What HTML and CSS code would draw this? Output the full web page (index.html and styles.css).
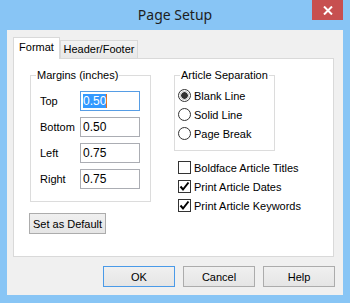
FILE: index.html
```html
<!DOCTYPE html>
<html>
<head>
	<title>Page Setup</title>
	<link rel="stylesheet" href="styles.css">
</head>
<body>
	<div class="window">
		<div class="titlebar">
			<span class="title">Page Setup</span>
			<span class="close">
				<svg width="10" height="9" viewBox="0 0 10 9"><path d="M1 0.5L9 8.5M9 0.5L1 8.5" stroke="#fff" stroke-width="2"/></svg>
			</span>
		</div>

		<div class="client">
			<div class="tabs">
				<div class="tab active">Format</div>
				<div class="tab">Header/Footer</div>
			</div>

			<div class="panel">
				<div class="col-left">
					<div class="group margins">
						<span class="group-title">Margins (inches)</span>
						<div class="fields">
							<div class="field"><span class="field-label">Top</span><span class="input focus"><span class="sel">0.50</span></span></div>
							<div class="field"><span class="field-label">Bottom</span><span class="input">0.50</span></div>
							<div class="field"><span class="field-label">Left</span><span class="input">0.75</span></div>
							<div class="field"><span class="field-label">Right</span><span class="input">0.75</span></div>
						</div>
					</div>
					<button class="btn default-btn">Set as Default</button>
				</div>

				<div class="col-right">
					<div class="group separation">
						<span class="group-title">Article Separation</span>
						<ul class="options">
							<li><span class="radio checked"></span>Blank Line</li>
							<li><span class="radio"></span>Solid Line</li>
							<li><span class="radio"></span>Page Break</li>
						</ul>
					</div>
					<ul class="options checks">
						<li><span class="check"></span>Boldface Article Titles</li>
						<li><span class="check on"><svg width="11" height="11" viewBox="0 0 11 11"><path d="M1.5 5.5L4 8.5L9.5 1.5" fill="none" stroke="#000" stroke-width="2"/></svg></span>Print Article Dates</li>
						<li><span class="check on"><svg width="11" height="11" viewBox="0 0 11 11"><path d="M1.5 5.5L4 8.5L9.5 1.5" fill="none" stroke="#000" stroke-width="2"/></svg></span>Print Article Keywords</li>
					</ul>
				</div>
			</div>

			<div class="actions">
				<button class="btn primary">OK</button>
				<button class="btn">Cancel</button>
				<button class="btn">Help</button>
			</div>
		</div>
	</div>
</body>
</html>
```

FILE: styles.css
```css
*{
	margin: 0;
	padding: 0;
	box-sizing: border-box;
}
ul{
	list-style: none;
}
body{
	width: 350px;
	height: 303px;
	background: #88c5f5;
	font-family: "Liberation Sans", Arial, sans-serif;
	font-size: 11px;
	color: #000;
	overflow: hidden;
	white-space: nowrap;
}
.window{
	width: 350px;
	height: 303px;
}
.titlebar{
	height: 30px;
	position: relative;
	text-align: center;
}
.title{
	font-family: "Noto Sans", sans-serif;
	font-size: 14px;
	line-height: 30px;
	color: #1e1e1e;
}
.close{
	position: absolute;
	right: 7px;
	top: 0;
	width: 31px;
	height: 20px;
	background: #c75050;
	display: flex;
	align-items: center;
	justify-content: center;
}
.client{
	margin: 0 7px;
	width: 336px;
	height: 265px;
	background: #f0f0f0;
	padding: 7px 8px 0 6px;
}

/* tabs */
.tabs{
	display: flex;
	align-items: flex-end;
	height: 21px;
}
.tab{
	height: 18px;
	width: 78px;
	border: 1px solid #d9d9d9;
	border-bottom: none;
	background: linear-gradient(#f3f3f3, #e8e8e8);
	text-align: center;
	line-height: 17px;
}
.tab.active{
	width: 47px;
	height: 22px;
	margin-bottom: -1px;
	background: #fff;
	position: relative;
	line-height: 18px;
}

.panel{
	width: 321px;
	height: 199px;
	border: 1px solid #d9d9d9;
	background: #fff;
	display: flex;
	padding: 16px 0 0 16px;
}
.col-left{
	width: 121px;
}
.col-right{
	margin-left: 23px;
	width: 140px;
}

/* group boxes */
.group{
	border: 1px solid #dcdcdc;
	display: flex;
	flex-direction: column;
	align-items: flex-start;
}
.group-title{
	margin: -7px 0 0 5px;
	padding: 0 1px;
	background: #fff;
	line-height: 13px;
}
.fields{
	margin-top: 9px;
	padding: 0 0 12px 9px;
	display: flex;
	flex-direction: column;
	gap: 6px;
}
.field{
	display: flex;
	align-items: center;
	height: 20px;
}
.field-label{
	width: 40px;
}
.input{
	width: 60px;
	height: 20px;
	border: 1px solid #abadb3;
	padding-left: 2px;
	line-height: 18px;
	font-size: 12px;
}
.input.focus{
	border-color: #569de5;
}
.sel{
	background: #3399ff;
	color: #fff;
	border-right: 1px solid #e07020;
}

.btn{
	height: 21px;
	width: 72px;
	border: 1px solid #acacac;
	background: linear-gradient(#f0f0f0, #e5e5e5);
	font-family: "Liberation Sans", Arial, sans-serif;
	font-size: 11px;
	color: #000;
	white-space: nowrap;
}
.btn.primary{
	border-color: #4a9ae8;
}
.default-btn{
	width: 77px;
	margin: 11px 0 0 -1px;
}

/* options */
.separation{
	width: 101px;
}
.options{
	margin-top: 4px;
	padding: 0 0 7px 3px;
	align-self: stretch;
}
.options li{
	height: 19px;
	display: flex;
	align-items: center;
}
.radio{
	width: 13px;
	height: 13px;
	border: 1px solid #333;
	border-radius: 50%;
	background: #fff;
	margin-right: 3px;
}
.radio.checked{
	background: radial-gradient(circle, #333 0 3px, #d4d4d4 3.5px 4.5px, #fff 5px);
}
.checks{
	margin-top: 7px;
	padding: 0 0 0 4px;
}
.check{
	width: 13px;
	height: 13px;
	border: 1px solid #333;
	background: #fff;
	margin-right: 3px;
	display: flex;
	align-items: center;
	justify-content: center;
}

.actions{
	display: flex;
	justify-content: flex-end;
	gap: 8px;
	margin-top: 9px;
}
```
